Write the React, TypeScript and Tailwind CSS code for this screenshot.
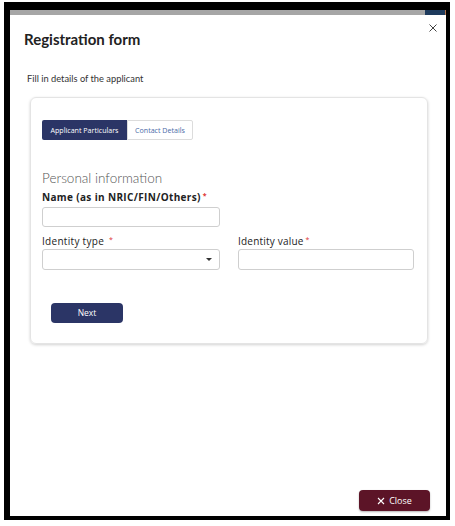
import React from "react";

const font = { fontFamily: "Lato, 'Open Sans', sans-serif" };
const os = { fontFamily: "'Open Sans', Lato, sans-serif" };

function Req() {
  return <span className="text-[#d33] text-[7px] align-top relative top-[-1px] ml-[2px]">*</span>;
}

export default function App() {
  return (
    <div className="w-[455px] h-[526px] bg-white pt-[2px] pl-[4px]" style={font}>
      <div className="w-[446px] h-[518px] border-black border-l-[6px] border-t-[8px] border-r-[4px] border-b-[4px] flex flex-col">
        <div className="h-[5px] flex shrink-0">
          <div className="flex-1 bg-[#a6a6a6]" />
          <div className="w-[20px] bg-[#1d3a5c]" />
          <div className="w-[1px] bg-[#b0704a]" />
        </div>
        <div className="relative flex-1 flex flex-col pl-[14px]">
          <button className="absolute right-[9px] top-[9px] w-[8px] h-[8px] flex items-center justify-center">
            <svg width="8" height="8" viewBox="0 0 8 8"><path d="M0.5 0.5 L7.5 7.5 M7.5 0.5 L0.5 7.5" stroke="#444" strokeWidth="1" /></svg>
          </button>
          <h1 className="mt-[14px] text-[15px] leading-[20px] font-bold text-[#222]">Registration form</h1>
          <p className="mt-[24px] ml-[3px] text-[9.3px] leading-[12px] text-[#333]">Fill in details of the applicant</p>
          <div className="mt-[12px] ml-[6px] w-[398px] h-[247px] rounded-[6px] border border-[#e4e4e4] shadow-[0_1px_3px_rgba(0,0,0,0.18)] pl-[11px] pt-[22px] flex flex-col">
            <div className="flex h-[20px]" style={os}>
              <div className="w-[85px] bg-[#2b3566] text-white text-[7.1px] flex items-center justify-center rounded-l-[2px]">Applicant Particulars</div>
              <div className="w-[66px] border border-[#dcdcdc] text-[#4a6aa8] text-[7.1px] flex items-center justify-center rounded-r-[2px]">Contact Details</div>
            </div>
            <div className="mt-[30px] text-[13.5px] leading-[16px] font-light text-[#555]">Personal information</div>
            <div className="mt-[5px] text-[10px] leading-[12px] font-bold tracking-[0.35px] text-[#222]" style={os}>Name (as in NRIC/FIN/Others)<Req /></div>
            <div className="mt-[4px] w-[178px] h-[20px] border border-[#cfcfcf] rounded-[3px]" />
            <div className="mt-[8px] flex gap-[18px]" style={os}>
              <div className="w-[178px] flex flex-col">
                <div className="text-[10px] leading-[12px] font-medium tracking-[0.3px] text-[#222]">Identity type <Req /></div>
                <div className="mt-[2px] h-[21px] border border-[#cfcfcf] rounded-[3px] flex items-center justify-end pr-[7px]">
                  <svg width="6" height="3" viewBox="0 0 6 3"><path d="M0 0 L6 0 L3 3 Z" fill="#333" /></svg>
                </div>
              </div>
              <div className="w-[176px] flex flex-col">
                <div className="text-[10px] leading-[12px] font-medium tracking-[0.2px] text-[#222]">Identity value<Req /></div>
                <div className="mt-[2px] h-[21px] border border-[#cfcfcf] rounded-[3px]" />
              </div>
            </div>
            <button className="mt-[33px] ml-[9px] w-[72px] h-[20px] rounded-[4px] bg-[#2b3566] text-white text-[8.5px]" style={os}>Next</button>
          </div>
          <div className="flex-1" />
          <div className="flex justify-end pr-[16px] mb-[5px]">
            <button className="w-[71px] h-[21px] rounded-[4px] bg-[#5c1427] text-white text-[9px] flex items-center justify-center gap-[4px] shadow-[0_1px_2px_rgba(0,0,0,0.3)]" style={os}>
              <svg width="8" height="8" viewBox="0 0 8 8"><path d="M1 1 L7 7 M7 1 L1 7" stroke="white" strokeWidth="1.1" /></svg>
              Close
            </button>
          </div>
        </div>
      </div>
    </div>
  );
}
